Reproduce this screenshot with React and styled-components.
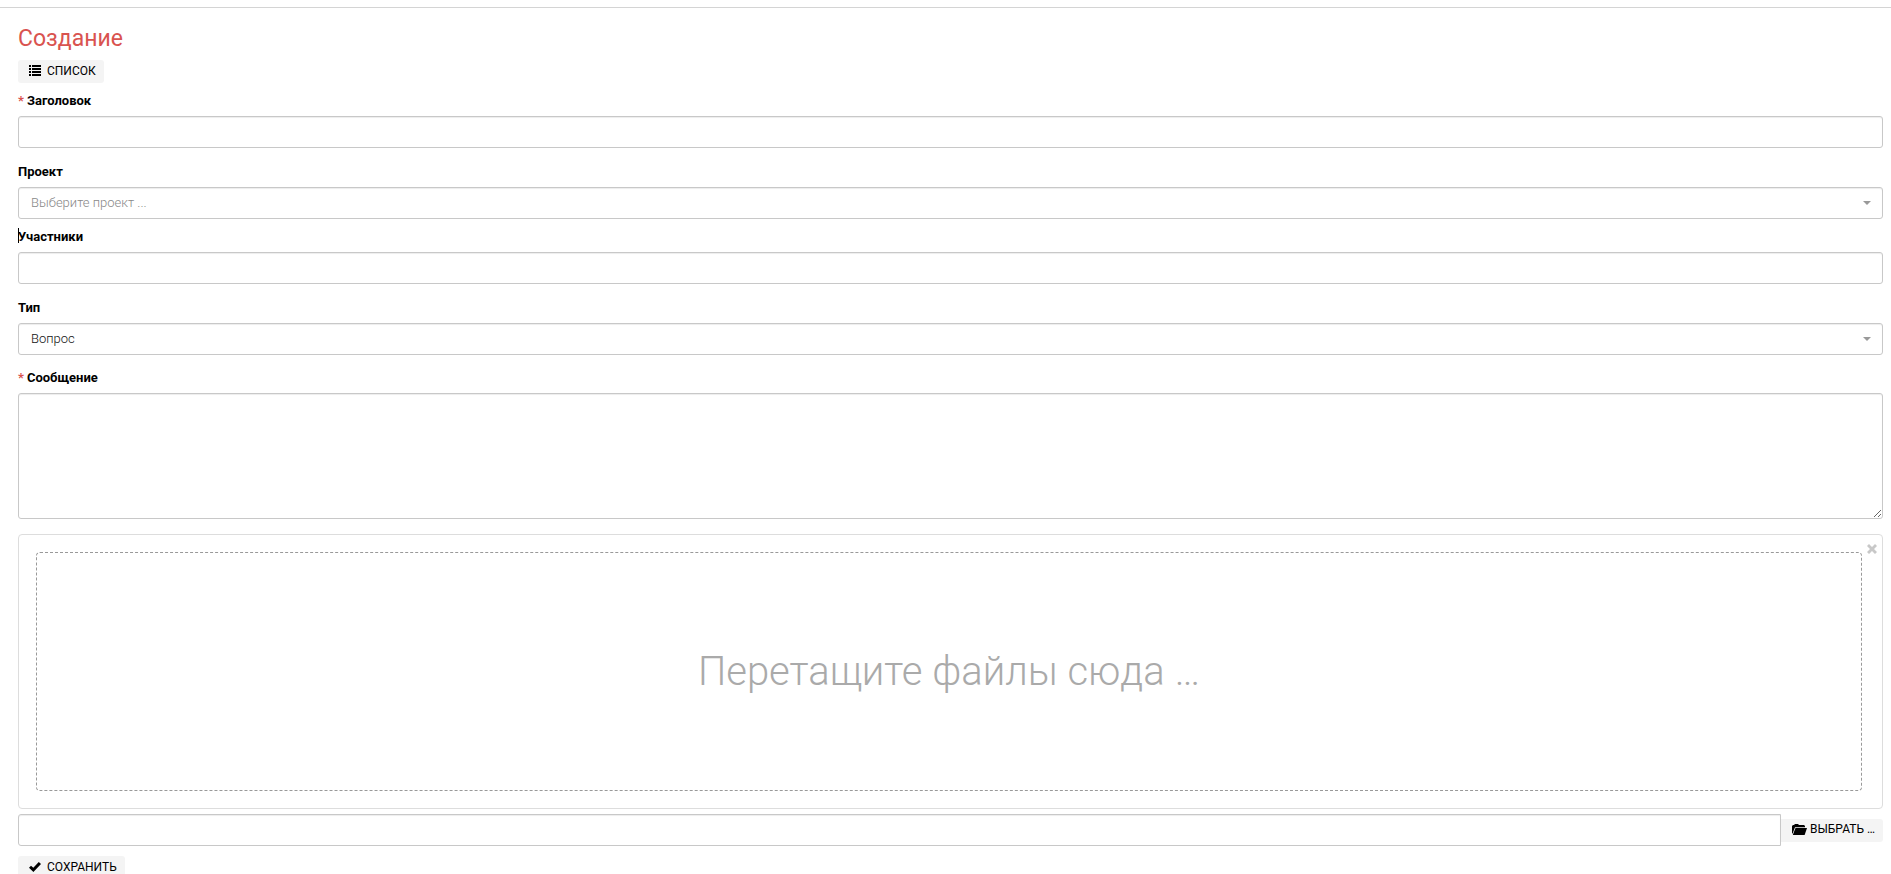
import React, { useState } from "react";
import styled, { createGlobalStyle } from "styled-components";

const GlobalStyle = createGlobalStyle`
  * {
    box-sizing: border-box;
  }
  html {
    scrollbar-width: none;
  }
  body {
    margin: 0;
    background: #fff;
    color: #000;
    font-family: Roboto, "Liberation Sans", sans-serif;
    font-size: 13px;
    line-height: 18px;
  }
  button, input, select, textarea {
    font: inherit;
  }
`;

const Page = styled.main`
  margin-top: 7px;
  border-top: 1px solid #d4d4d4;
  padding: 17px 8px 16px 18px;
`;

const Title = styled.h1`
  margin: 0 0 7px;
  color: #d9534f;
  font-size: 23px;
  font-weight: 400;
  line-height: 28px;
`;

const Button = styled.button`
  display: flex;
  flex: none;
  align-items: center;
  gap: ${(props) => props.$gap || 6}px;
  height: 23px;
  padding: 0 8px 2px 11px;
  border: 0;
  border-radius: ${(props) => (props.$attached ? "0 3px 3px 0" : "3px")};
  background: #f4f4f4;
  color: #000;
  font-size: 12px;
  line-height: 18px;
  text-transform: uppercase;
  white-space: nowrap;
  cursor: pointer;
  svg {
    display: block;
    fill: currentColor;
  }
`;

const Form = styled.form`
  padding-top: 9px;
`;

const Field = styled.div`
  display: flex;
  flex-direction: column;
  gap: 6px;
  margin-bottom: ${(props) => props.$space || 15}px;
`;

const Label = styled.label`
  position: relative;
  align-self: flex-start;
  font-weight: 700;
  line-height: 18px;
`;

const Required = styled.span`
  margin-right: 3px;
  color: #d9534f;
`;

const Caret = styled.span`
  position: absolute;
  top: 0;
  left: 0;
  width: 1px;
  height: 15px;
  background: #000;
`;

const controlStyle = `
  display: block;
  width: 100%;
  border: 1px solid #c8c8c8;
  border-radius: 3px;
  background: #fff;
  box-shadow: inset 0 1px 1px rgba(0, 0, 0, 0.075);
  color: #555;
  outline: none;
`;

const Input = styled.input`
  ${controlStyle}
  height: 32px;
  padding: 6px 12px;
`;

const FileCaption = styled(Input)`
  flex: 1;
  width: auto;
  min-width: 0;
  border-radius: 3px 0 0 3px;
`;

const Textarea = styled.textarea`
  ${controlStyle}
  height: 126px;
  padding: 6px 12px;
  resize: vertical;
`;

const SelectWrap = styled.div`
  position: relative;
  &::after {
    content: "";
    position: absolute;
    top: 14px;
    right: 12px;
    border: 4px solid transparent;
    border-top-color: #999;
    border-bottom: 0;
    pointer-events: none;
  }
`;

const Select = styled.select`
  ${controlStyle}
  height: 32px;
  padding: 0 24px 0 12px;
  appearance: none;
  color: ${(props) => (props.$empty ? "#888" : "#111")};
  font-weight: 300;
`;

const Preview = styled.div`
  position: relative;
  margin-bottom: 5px;
  padding: 17px 20px 17px 17px;
  border: 1px solid #ddd;
  border-radius: 4px;
`;

const Close = styled.button`
  position: absolute;
  top: 9px;
  right: 5px;
  padding: 0;
  border: 0;
  background: none;
  cursor: pointer;
  svg {
    display: block;
    fill: #c8c8c8;
  }
`;

const DropZone = styled.div`
  display: flex;
  align-items: center;
  justify-content: center;
  height: 239px;
  border: 1px dashed #999;
  border-radius: 4px;
  color: #aaa;
  font-size: 40px;
  font-weight: 300;
  line-height: 48px;
`;

const FileRow = styled.div`
  display: flex;
  align-items: center;
  margin-bottom: 10px;
`;

const ListIcon = () => (
  <svg width="12" height="11" viewBox="0 0 12 11" aria-hidden="true">
    <path d="M0 0h2v2H0zM3 0h9v2H3zM0 3h2v2H0zM3 3h9v2H3zM0 6h2v2H0zM3 6h9v2H3zM0 9h2v2H0zM3 9h9v2H3z" />
  </svg>
);

const CheckIcon = () => (
  <svg width="12" height="10" viewBox="0 0 12 10" aria-hidden="true">
    <path d="M0 5.8 2 3.7l2.3 2L9.8 0 12 2 4.4 10z" />
  </svg>
);

const FolderIcon = () => (
  <svg width="15" height="11" viewBox="0 0 15 11" aria-hidden="true">
    <path d="M0 9.5V2l1-1h1l1-1h3l1 1h5l1 1v1.2H3L.6 9.5z" />
    <path d="M3.5 4H15l-2.4 7H.8z" />
  </svg>
);

const CloseIcon = () => (
  <svg width="10" height="10" viewBox="0 0 10 10" aria-hidden="true">
    <path d="M0 2 2 0l3 3 3-3 2 2-3 3 3 3-2 2-3-3-3 3-2-2 3-3z" />
  </svg>
);

export default function App() {
  const [project, setProject] = useState("");
  const [type, setType] = useState("question");

  return (
    <>
      <GlobalStyle />
      <Page>
        <Title>Создание</Title>
        <Button type="button">
          <ListIcon />
          Список
        </Button>
        <Form onSubmit={(e) => e.preventDefault()}>
          <Field>
            <Label htmlFor="title">
              <Required>*</Required>
              Заголовок
            </Label>
            <Input id="title" type="text" />
          </Field>
          <Field $space={9}>
            <Label htmlFor="project">Проект</Label>
            <SelectWrap>
              <Select
                id="project"
                $empty={!project}
                value={project}
                onChange={(e) => setProject(e.target.value)}
              >
                <option value="">Выберите проект ...</option>
              </Select>
            </SelectWrap>
          </Field>
          <Field>
            <Label htmlFor="members">
              <Caret />
              Участники
            </Label>
            <Input id="members" type="text" />
          </Field>
          <Field $space={14}>
            <Label htmlFor="type">Тип</Label>
            <SelectWrap>
              <Select
                id="type"
                value={type}
                onChange={(e) => setType(e.target.value)}
              >
                <option value="question">Вопрос</option>
              </Select>
            </SelectWrap>
          </Field>
          <Field>
            <Label htmlFor="message">
              <Required>*</Required>
              Сообщение
            </Label>
            <Textarea id="message" />
          </Field>
          <Preview>
            <Close type="button" aria-label="Закрыть">
              <CloseIcon />
            </Close>
            <DropZone>Перетащите файлы сюда …</DropZone>
          </Preview>
          <FileRow>
            <FileCaption type="text" aria-label="Файлы" readOnly />
            <Button type="button" $attached $gap={3}>
              <FolderIcon />
              Выбрать …
            </Button>
          </FileRow>
          <Button type="submit">
            <CheckIcon />
            Сохранить
          </Button>
        </Form>
      </Page>
    </>
  );
}
